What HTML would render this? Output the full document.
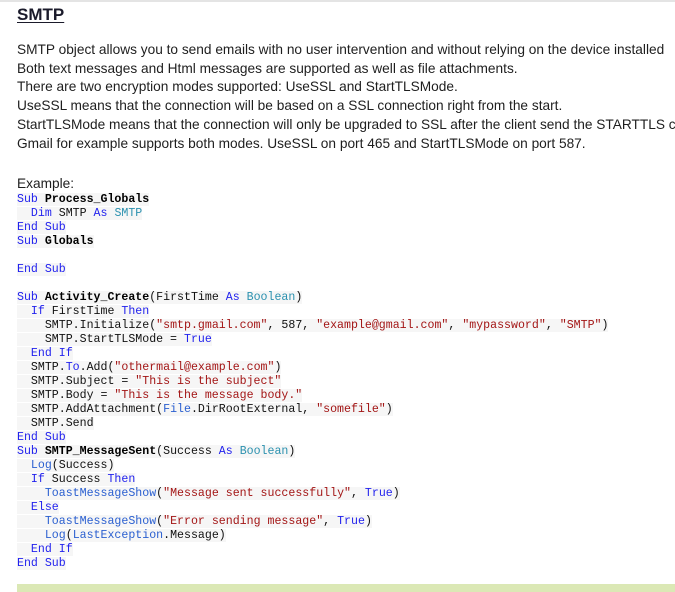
<!DOCTYPE html>
<html><head><meta charset="utf-8"><style>
html,body{margin:0;padding:0;background:#fff;width:675px;height:592px;overflow:hidden;position:relative}
.top{position:absolute;left:0;top:0;width:675px;height:2px;background:#e4e4e4}
h1{position:absolute;left:17px;top:4px;margin:0;font:bold 17px/22px "Liberation Sans",sans-serif;color:#1b1b2b;text-decoration:underline;text-underline-offset:2px}
.t{position:absolute;left:17px;font:13.7px/18px "Liberation Sans",sans-serif;color:#1e1e1e;white-space:nowrap}
.code{position:absolute;left:17px;top:193px;font:11.6px/14px "Liberation Mono",monospace;color:#111}
.code div{height:14px;white-space:pre}
.code span.l{background:#f6f6f6}
.k{color:#2222ee}.s{color:#a31515}.ty{color:#2b91af}.f{color:#2a5fd0}.b{font-weight:bold;color:#000}
.bar{position:absolute;left:17px;top:584px;width:658px;height:8px;background:#dbe8b5;overflow:hidden;font:bold 14px/20px "Liberation Sans",sans-serif}
</style></head><body>
<div class="top"></div>
<h1>SMTP</h1>
<div class="t" style="top:41px">SMTP object allows you to send emails with no user intervention and without relying on the device installed</div>
<div class="t" style="top:60px">Both text messages and Html messages are supported as well as file attachments.</div>
<div class="t" style="top:78px">There are two encryption modes supported: UseSSL and StartTLSMode.</div>
<div class="t" style="top:97px">UseSSL means that the connection will be based on a SSL connection right from the start.</div>
<div class="t" style="top:116px">StartTLSMode means that the connection will only be upgraded to SSL after the client send the STARTTLS co</div>
<div class="t" style="top:135px">Gmail for example supports both modes. UseSSL on port 465 and StartTLSMode on port 587.</div>
<div class="t" style="top:175px">Example:</div>
<div class="code"><div><span class="l"><span class="k">Sub</span> <span class="b">Process_Globals</span></span></div><div><span class="l">  <span class="k">Dim</span> SMTP <span class="k">As</span> <span class="ty">SMTP</span></span></div><div><span class="l"><span class="k">End Sub</span></span></div><div><span class="l"><span class="k">Sub</span> <span class="b">Globals</span></span></div><div></div><div><span class="l"><span class="k">End Sub</span></span></div><div></div><div><span class="l"><span class="k">Sub</span> <span class="b">Activity_Create</span>(FirstTime <span class="k">As</span> <span class="ty">Boolean</span>)</span></div><div><span class="l">  <span class="k">If</span> FirstTime <span class="k">Then</span></span></div><div><span class="l">    SMTP.Initialize(<span class="s">"smtp.gmail.com"</span>, 587, <span class="s">"example@gmail.com"</span>, <span class="s">"mypassword"</span>, <span class="s">"SMTP"</span>)</span></div><div><span class="l">    SMTP.StartTLSMode = <span class="k">True</span></span></div><div><span class="l">  <span class="k">End If</span></span></div><div><span class="l">  SMTP.<span class="k">To</span>.Add(<span class="s">"othermail@example.com"</span>)</span></div><div><span class="l">  SMTP.Subject = <span class="s">"This is the subject"</span></span></div><div><span class="l">  SMTP.Body = <span class="s">"This is the message body."</span></span></div><div><span class="l">  SMTP.AddAttachment(<span class="f">File</span>.DirRootExternal, <span class="s">"somefile"</span>)</span></div><div><span class="l">  SMTP.Send</span></div><div><span class="l"><span class="k">End Sub</span></span></div><div><span class="l"><span class="k">Sub</span> <span class="b">SMTP_MessageSent</span>(Success <span class="k">As</span> <span class="ty">Boolean</span>)</span></div><div><span class="l">  <span class="f">Log</span>(Success)</span></div><div><span class="l">  <span class="k">If</span> Success <span class="k">Then</span></span></div><div><span class="l">    <span class="f">ToastMessageShow</span>(<span class="s">"Message sent successfully"</span>, <span class="k">True</span>)</span></div><div><span class="l">  <span class="k">Else</span></span></div><div><span class="l">    <span class="f">ToastMessageShow</span>(<span class="s">"Error sending message"</span>, <span class="k">True</span>)</span></div><div><span class="l">    <span class="f">Log</span>(<span class="f">LastException</span>.Message)</span></div><div><span class="l">  <span class="k">End If</span></span></div><div><span class="l"><span class="k">End Sub</span></span></div></div>
<div class="bar"><div style="padding-left:2px;margin-top:4px">Permissions</div></div>
</body></html>
